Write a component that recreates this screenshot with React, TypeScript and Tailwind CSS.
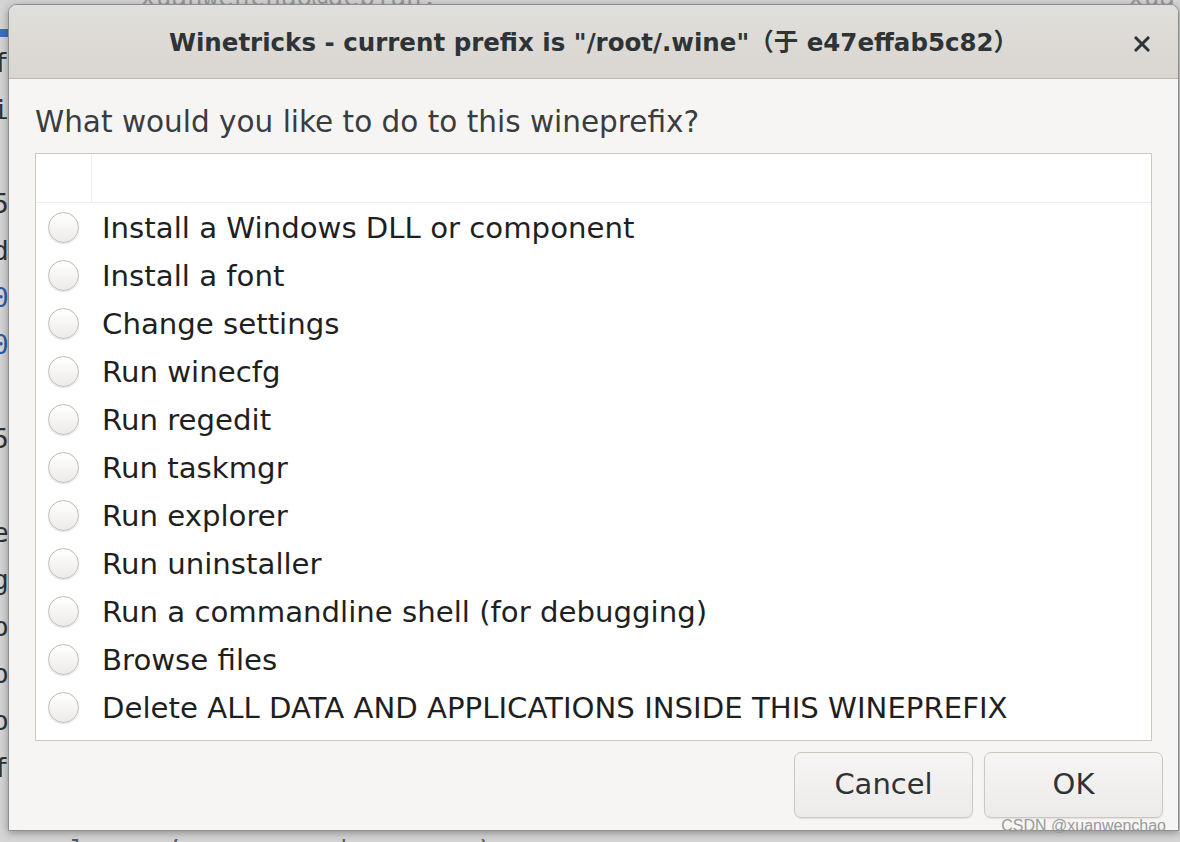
import React from 'react';

const options = [
  'Install a Windows DLL or component',
  'Install a font',
  'Change settings',
  'Run winecfg',
  'Run regedit',
  'Run taskmgr',
  'Run explorer',
  'Run uninstaller',
  'Run a commandline shell (for debugging)',
  'Browse files',
  'Delete ALL DATA AND APPLICATIONS INSIDE THIS WINEPREFIX',
];

// glyphs peeking out of the terminal behind the dialog
const leftStrip = [
  { ch: 'f', cls: 'text-[#2e3436]' },
  { ch: 'i', cls: 'text-[#2e3436]' },
  { ch: '', cls: '' },
  { ch: '5', cls: 'text-[#2e3436]' },
  { ch: 'd', cls: 'text-[#2e3436]' },
  { ch: '0', cls: 'text-[#2a5db0]' },
  { ch: '0', cls: 'text-[#2a5db0]' },
  { ch: '', cls: '' },
  { ch: '5', cls: 'text-[#2e3436]' },
  { ch: '', cls: '' },
  { ch: 'e', cls: 'text-[#2e3436]' },
  { ch: 'g', cls: 'text-[#2e3436]' },
  { ch: 'o', cls: 'text-[#2e3436]' },
  { ch: 'o', cls: 'text-[#2e3436]' },
  { ch: 'o', cls: 'text-[#2e3436]' },
  { ch: 'f', cls: 'text-[#2e3436]' },
];

function Radio() {
  return (
    <span className="w-[31px] h-[31px] rounded-full border border-[#c3bdb7] bg-gradient-to-b from-white to-[#edebe9] shadow-[0_1px_1px_rgba(0,0,0,0.12)] shrink-0" />
  );
}

export default function App() {
  return (
    <div className="relative w-[1180px] h-[842px] overflow-hidden bg-[#d5d5d5] font-['DejaVu_Sans',sans-serif]">
      {/* terminal behind */}
      <div className="absolute inset-0">
        <div className="absolute left-[140px] top-[-22px] text-[26px] text-[#9a9a9a] font-['DejaVu_Sans_Mono',monospace]">xuanwenchao@debian:</div>
        <div className="absolute left-[1128px] top-[-22px] text-[26px] text-[#9a9a9a] font-['DejaVu_Sans_Mono',monospace]">xua</div>
        <div className="absolute left-0 top-[29px] w-[9px] h-[8px] bg-[#3b6fc4]" />
        <div className="absolute left-[-7px] top-[40px] flex flex-col text-[26px] leading-[47px] font-['DejaVu_Sans_Mono',monospace]">
          {leftStrip.map((l, i) => (
            <span key={i} className={`h-[47px] ${l.cls}`}>{l.ch}</span>
          ))}
        </div>
        <div className="absolute left-[70px] top-[831px] text-[26px] text-[#5a5a5a] font-['DejaVu_Sans_Mono',monospace]">l &nbsp;&nbsp;&nbsp;&nbsp;/ &nbsp;&nbsp;&nbsp;&nbsp;&nbsp;&nbsp;&nbsp;&nbsp;&nbsp;|&nbsp;&nbsp;&nbsp;&nbsp;&nbsp;&nbsp;&nbsp;&nbsp;)</div>
      </div>

      {/* dialog window */}
      <div className="absolute left-[8px] top-[4px] w-[1171px] h-[827px] flex flex-col rounded-t-[9px] border border-[#8e8e8e] bg-[#f6f5f4] shadow-[0_2px_8px_rgba(0,0,0,0.35)] overflow-hidden">
        <div className="h-[74px] shrink-0 flex items-center relative bg-gradient-to-b from-[#e1dfdb] to-[#d9d6d2] border-b border-[#bdb7b0]">
          <div className="flex-1 text-center pt-[4px] text-[24.5px] font-bold text-[#2e3436] font-['DejaVu_Sans','Noto_Sans_CJK_SC',sans-serif]">
            Winetricks - current prefix is "/root/.wine"（于 e47effab5c82）
          </div>
          <svg className="absolute right-[28px] top-[31px]" width="16" height="16" viewBox="0 0 16 16">
            <path d="M2 2 L14 14 M14 2 L2 14" stroke="#2e3436" strokeWidth="3" strokeLinecap="square" />
          </svg>
        </div>

        <div className="flex-1 flex flex-col px-[26px]">
          <div className="h-[74px] pt-[12px] flex items-center text-[29.5px] text-[#3a3c3e]">
            What would you like to do to this wineprefix?
          </div>

          <div className="border border-[#cdc7c2] bg-white h-[588px] flex flex-col">
            <div className="h-[49px] flex border-b border-[#efeeec]">
              <div className="w-[56px] border-r border-[#efeeec]" />
              <div className="flex-1" />
            </div>
            {options.map((o) => (
              <div key={o} className="h-[48px] flex items-center pl-[12px] gap-[23px]">
                <Radio />
                <span className="pt-[3px] text-[29.2px] text-[#1f1f1f] whitespace-nowrap">{o}</span>
              </div>
            ))}
          </div>

          <div className="flex justify-end gap-[11px] mt-[11px] mr-[-11px]">
            {['Cancel', 'OK'].map((b) => (
              <button
                key={b}
                className="w-[179px] h-[66px] rounded-[7px] border border-[#cdc7c2] bg-gradient-to-b from-[#f6f5f4] to-[#edebe9] shadow-[0_1px_1px_rgba(0,0,0,0.08)] text-[29px] text-[#2e3436]"
              >
                {b}
              </button>
            ))}
          </div>
        </div>
      </div>

      <div className="absolute right-[14px] bottom-[8px] text-[16px] leading-none text-[#9a9a9a] font-['Liberation_Sans',sans-serif]">
        CSDN @xuanwenchao
      </div>
    </div>
  );
}
